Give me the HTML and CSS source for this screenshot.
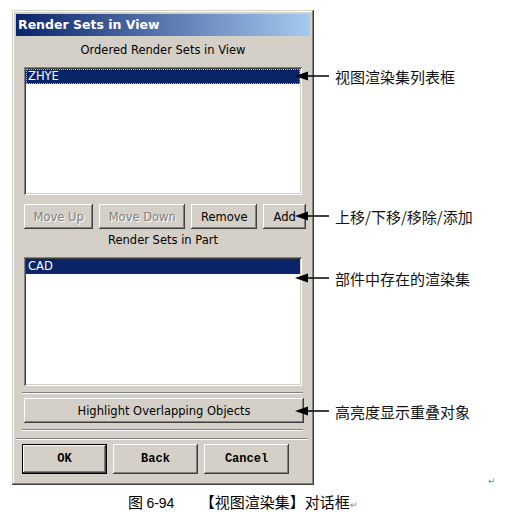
FILE: index.html
```html
<!DOCTYPE html>
<html lang="zh">
<head>
    <meta charset="UTF-8">
    <title>Render Sets in View</title>
    <link rel="stylesheet" href="styles.css">
</head>
<body>
    <div class="figure">
        <div class="dialog">
            <div class="titlebar">Render Sets in View</div>
            <div class="content">
                <div class="label">Ordered Render Sets in View</div>
                <div class="listbox list-view">
                    <div class="item selected focus">ZHYE</div>
                </div>
                <div class="btnrow">
                    <button class="btn disabled b-up">Move Up</button>
                    <button class="btn disabled b-down">Move Down</button>
                    <button class="btn b-remove">Remove</button>
                    <button class="btn b-add">Add</button>
                </div>
                <div class="label second">Render Sets in Part</div>
                <div class="listbox list-part">
                    <div class="item selected">CAD</div>
                </div>
                <div class="sep inner"></div>
                <button class="btn wide">Highlight Overlapping Objects</button>
                <div class="sep inner"></div>
            </div>
            <div class="sep full"></div>
            <div class="footer">
                <button class="btn mono default">OK</button>
                <button class="btn mono">Back</button>
                <button class="btn mono">Cancel</button>
            </div>
        </div>

        <!-- callouts -->
        <div class="callout c1">
            <svg width="34" height="10" viewBox="0 0 34 10"><polygon points="0,5 13,0.5 13,9.5" fill="#000"/><line x1="12" y1="5" x2="34" y2="5" stroke="#000" stroke-width="1.5"/></svg>
            <span>视图渲染集列表框</span>
        </div>
        <div class="callout c2">
            <svg width="34" height="10" viewBox="0 0 34 10"><polygon points="0,5 13,0.5 13,9.5" fill="#000"/><line x1="12" y1="5" x2="34" y2="5" stroke="#000" stroke-width="1.5"/></svg>
            <span>上移/下移/移除/添加</span>
        </div>
        <div class="callout c3">
            <svg width="34" height="10" viewBox="0 0 34 10"><polygon points="0,5 13,0.5 13,9.5" fill="#000"/><line x1="12" y1="5" x2="34" y2="5" stroke="#000" stroke-width="1.5"/></svg>
            <span>部件中存在的渲染集</span>
        </div>
        <div class="callout c4">
            <svg width="34" height="10" viewBox="0 0 34 10"><polygon points="0,5 13,0.5 13,9.5" fill="#000"/><line x1="12" y1="5" x2="34" y2="5" stroke="#000" stroke-width="1.5"/></svg>
            <span>高亮度显示重叠对象</span>
        </div>
        <span class="pmark loose">↵</span>
    </div>
    <div class="caption">
        <span class="fig">图 <span class="num">6-94</span></span>
        <span class="title">【视图渲染集】对话框</span><span class="pmark">↵</span>
    </div>
</body>
</html>
```

FILE: styles.css
```css
body {
    margin: 0;
    background-color: #fff;
    font-family: "DejaVu Sans", Verdana, sans-serif;
    font-size: 11.5px;
    color: #000;
}
.figure {
    position: relative;
    padding: 10px 0 0 12px;
    width: 499px;
}
.dialog {
    width: 302px;
    height: 475px;
    box-sizing: border-box;
    padding: 4px;
    background-color: #d4d0c8;
    box-shadow: inset -1px -1px #404040, inset 1px 1px #d4d0c8, inset -2px -2px #808080, inset 2px 2px #fff;
    display: flex;
    flex-direction: column;
}
.titlebar {
    height: 22px;
    line-height: 22px;
    padding-left: 2px;
    color: #fff;
    font-weight: bold;
    font-size: 12.5px;
    background: linear-gradient(to right, #0a246a, #a6caf0);
}
.content {
    padding: 0 8px;
    display: flex;
    flex-direction: column;
}
.label {
    text-align: center;
    line-height: 16px;
    margin-top: 6px;
}
.label.second {
    margin-top: 3px;
}
.listbox {
    margin-top: 9px;
    background-color: #fff;
    padding: 2px;
    box-shadow: inset 1px 1px #808080, inset -1px -1px #fff, inset 2px 2px #404040, inset -2px -2px #d4d0c8;
}
.list-view {
    height: 128px;
    box-sizing: border-box;
}
.list-part {
    height: 129px;
    box-sizing: border-box;
}
.item {
    height: 15px;
    line-height: 15px;
    padding-left: 2px;
}
.selected {
    background-color: #0a246a;
    color: #fff;
}
.focus {
    outline: 1px dotted #c8b88e;
    outline-offset: -1px;
}
.btnrow {
    display: flex;
    gap: 6px;
    margin-top: 9px;
    margin-right: -4px;
}
.btn {
    height: 25px;
    padding: 0;
    border: none;
    background-color: #d4d0c8;
    font-family: "DejaVu Sans", Verdana, sans-serif;
    font-size: 11.5px;
    color: #000;
    box-shadow: inset -1px -1px #404040, inset 1px 1px #fff, inset -2px -2px #808080, inset 2px 2px #d4d0c8;
}
.btn.disabled {
    color: #808080;
    text-shadow: 1px 1px #fff;
}
.b-up { width: 70px; }
.b-down { width: 87px; }
.b-remove { width: 67px; }
.b-add { width: 43px; }
.btn.wide {
    margin-top: 4px;
    margin-right: -2px;
}
.sep {
    height: 0;
    border-top: 1px solid #808080;
    border-bottom: 1px solid #fff;
}
.sep.inner {
    margin: 6px -1px 0 -2px;
}
.sep.full {
    margin: 7px 2px 0 0;
}
.footer {
    display: flex;
    gap: 6px;
    padding-left: 6px;
    margin-top: 4px;
}
.btn.mono {
    width: 85px;
    height: 30px;
    font-family: "Liberation Mono", "Courier New", monospace;
    font-weight: bold;
    font-size: 12px;
}
.btn.default {
    box-shadow: inset 0 0 0 1px #000, inset -2px -2px #404040, inset 2px 2px #fff, inset -3px -3px #808080;
}
.callout {
    position: absolute;
    left: 295px;
    height: 20px;
    display: flex;
    align-items: center;
    gap: 6px;
    font-family: "Noto Sans CJK SC", sans-serif;
    font-size: 15px;
    color: #111;
}
.callout svg {
    display: block;
}
.c1 { top: 66px; }
.c2 { top: 206px; }
.c3 { top: 268px; }
.c4 { top: 401px; }
.pmark {
    font-size: 9px;
    color: #888;
}
.loose {
    position: absolute;
    left: 488px;
    top: 476px;
}
.caption {
    margin-top: 7px;
    padding-left: 128px;
    line-height: 20px;
    font-family: "Noto Sans CJK SC", sans-serif;
    font-size: 15px;
}
.caption .num {
    font-family: "Liberation Sans", Arial, sans-serif;
    font-size: 14px;
}
.caption .fig {
    margin-right: 22px;
}
```
